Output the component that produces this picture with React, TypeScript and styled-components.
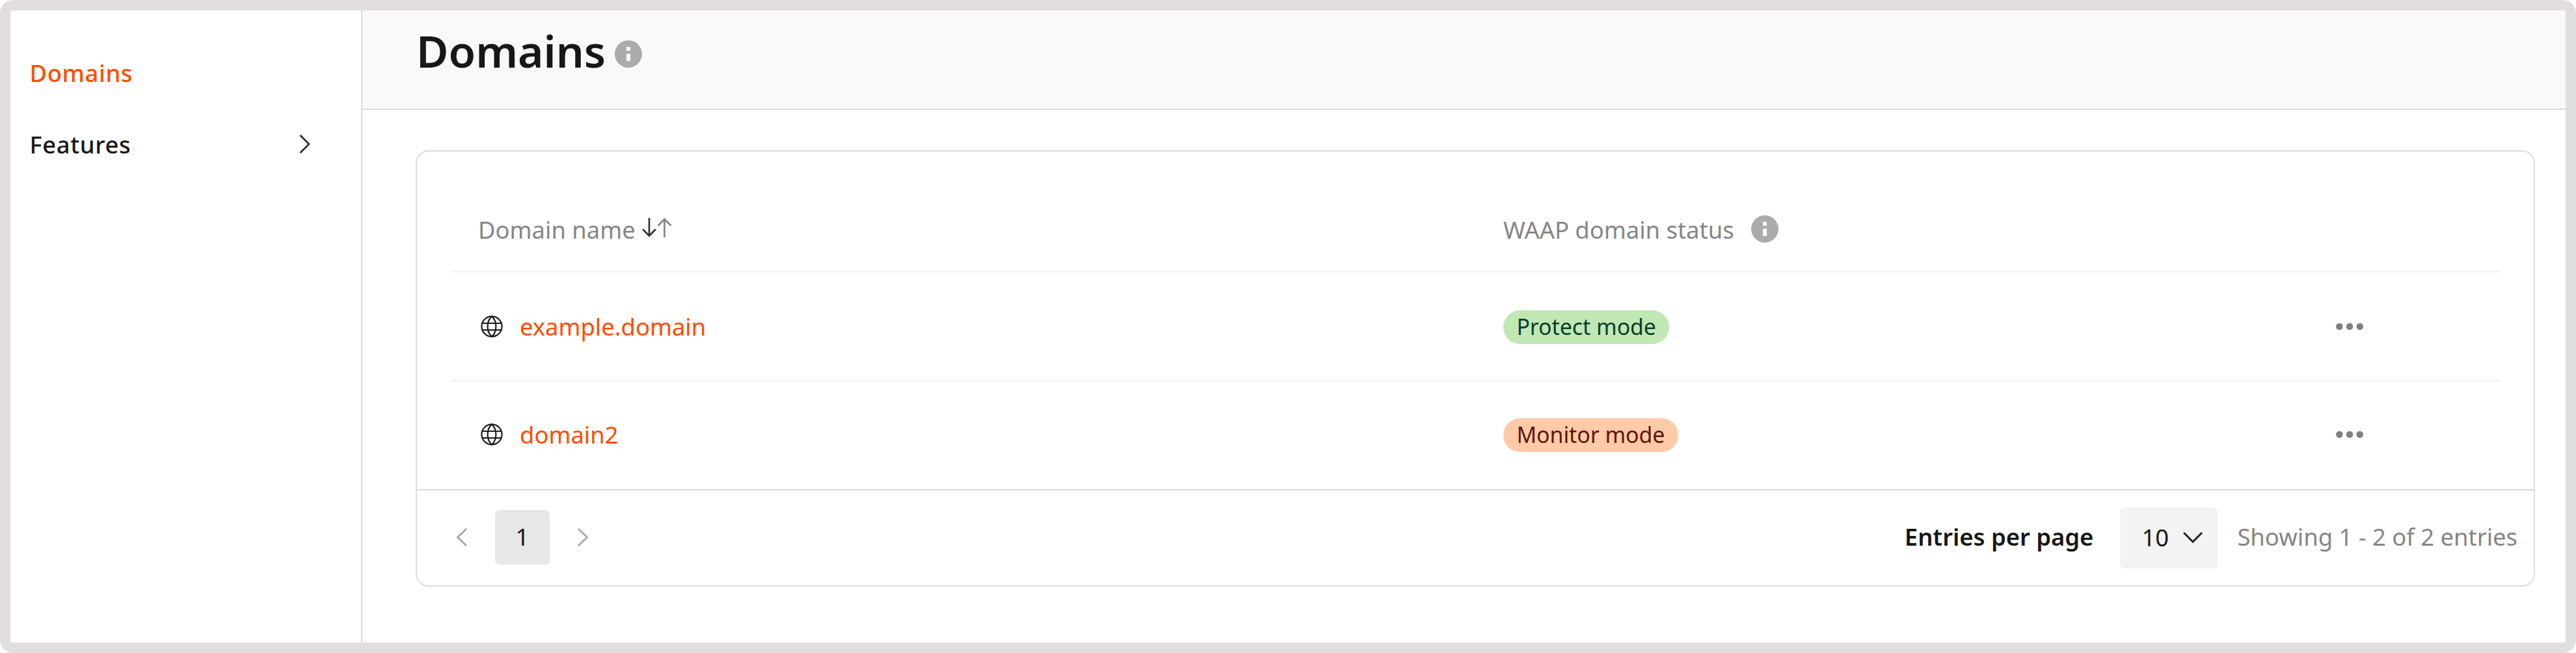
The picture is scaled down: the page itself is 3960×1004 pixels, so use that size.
import React from "react";
import styled, { createGlobalStyle } from "styled-components";

const GlobalStyle = createGlobalStyle`
  *, *::before, *::after { box-sizing: border-box; }
  body { margin: 0; background: #fff; }
`;

const Frame = styled.div`
  display: flex;
  width: 3960px;
  height: 1004px;
  padding: 16px;
  background: #e2dedd;
  border-radius: 20px;
  font-family: "Noto Sans", "Open Sans", sans-serif;
  font-size: 36.4px;
  line-height: 50px;
  color: #171717;
`;

const Shell = styled.div`
  display: flex;
  flex: 1;
  overflow: hidden;
  background: #fff;
  border-radius: 4px;
`;

const Sidebar = styled.nav`
  display: flex;
  flex-direction: column;
  gap: 60px;
  width: 541px;
  padding: 71px 78px 0 29.5px;
  border-right: 2px solid #dadae0;
`;

const NavItem = styled.a<{ $active?: boolean }>`
  display: flex;
  align-items: center;
  justify-content: space-between;
  height: 50px;
  font-weight: 500;
  letter-spacing: 0.6px;
  color: ${(p) => (p.$active ? "#ff4c00" : "#171717")};
`;

const Main = styled.main`
  display: flex;
  flex: 1;
  flex-direction: column;
`;

const PageHeader = styled.header`
  display: flex;
  align-items: flex-start;
  gap: 14px;
  height: 153px;
  padding: 17px 83px 0;
  background: #f9f9f9;
  border-bottom: 2px solid #d8d8de;
`;

const Title = styled.h1`
  margin: 0;
  font-size: 67.6px;
  font-weight: 600;
  line-height: 90px;
`;

const TitleInfo = styled.span`
  display: flex;
  padding-top: 29px;
`;

const Card = styled.section`
  display: flex;
  flex-direction: column;
  height: 671px;
  margin: 62px 47px 0 82px;
  border: 2px solid #dcdce1;
  border-radius: 20px;
`;

const Table = styled.div`
  display: flex;
  flex-direction: column;
  height: 519px;
  padding: 55px 51px 0 52px;
`;

const Row = styled.div<{ $height: number; $last?: boolean }>`
  display: grid;
  grid-template-columns: 1576px 1280px 1fr;
  align-items: center;
  height: ${(p) => p.$height}px;
  padding-left: 42px;
  border-bottom: ${(p) => (p.$last ? "none" : "3px solid #f4f4f4")};
`;

const Cell = styled.div<{ $gap?: number; $indent?: number }>`
  display: flex;
  align-items: center;
  gap: ${(p) => p.$gap ?? 0}px;
  padding-left: ${(p) => p.$indent ?? 0}px;
`;

const HeadLabel = styled.span`
  padding-top: 1px;
  color: #858585;
`;

const DomainLink = styled.a`
  color: #ff4c00;
`;

const Badge = styled.span<{ $tone: "green" | "orange" }>`
  height: 52px;
  margin-top: 2px;
  padding: 0 20.4px;
  border-radius: 26px;
  font-size: 33.8px;
  line-height: 51px;
  background: ${(p) => (p.$tone === "green" ? "#c1e7b5" : "#ffcaa7")};
  color: ${(p) => (p.$tone === "green" ? "#06402b" : "#5e1400")};
`;

const Footer = styled.footer`
  display: flex;
  align-items: center;
  justify-content: space-between;
  height: 148px;
  padding: 0 25px 2px 60px;
  border-top: 2px solid #d8d8e0;
`;

const Pager = styled.div`
  display: flex;
  align-items: center;
  gap: 43px;
`;

const PageButton = styled.button`
  width: 84px;
  height: 84px;
  padding: 0 0 2px;
  border: 0;
  border-radius: 7px;
  background: #e7e7e7;
  color: inherit;
  font: inherit;
`;

const PageInfo = styled.div`
  display: flex;
  align-items: center;
`;

const EntriesLabel = styled.span`
  margin-right: 41px;
  padding-bottom: 2px;
  font-weight: 600;
`;

const Select = styled.button`
  display: flex;
  align-items: center;
  justify-content: space-between;
  width: 150px;
  height: 94px;
  margin: 2px 30px 0 0;
  padding: 0 23px 2px 33px;
  border: 0;
  border-radius: 7px;
  background: #f3f3f3;
  color: inherit;
  font: inherit;
`;

const Summary = styled.span`
  padding-bottom: 2px;
  color: #858585;
`;

const Icon = styled.svg<{ $lift?: number }>`
  display: block;
  flex: none;
  fill: none;
  margin-bottom: ${(p) => p.$lift ?? 0}px;
`;

const InfoIcon = () => (
  <Icon width="42" height="42" viewBox="0 0 42 42">
    <circle cx="21" cy="21" r="21" fill="#ababab" />
    <path d="M18 10h6v6h-6zM18 20.7h6v11h-6z" fill="#fff" />
  </Icon>
);

const Chevron = ({ d, w, h, color }: { d: string; w: number; h: number; color: string }) => (
  <Icon width={w} height={h} viewBox={`0 0 ${w} ${h}`}>
    <path d={d} stroke={color} strokeWidth="3" />
  </Icon>
);

const SortIcon = () => (
  <Icon width="46" height="30" viewBox="0 0 46 30" $lift={5}>
    <path d="M12 0V28M2 17.5L12 27.5L22 17.5" stroke="#333" strokeWidth="2.7" />
    <path d="M35.5 30V2M25.5 12L35.5 2L45.5 12" stroke="#858585" strokeWidth="2.7" />
  </Icon>
);

const GlobeIcon = () => (
  <Icon width="34" height="34" viewBox="0 0 34 34">
    <g stroke="#1c1c1c" strokeWidth="2.2">
      <circle cx="17" cy="17" r="15.6" />
      <path d="M2.2 12H31.8M2.2 22.3H31.8M17 1.4C8.5 9 8.5 25 17 32.6M17 1.4C25.5 9 25.5 25 17 32.6" />
    </g>
  </Icon>
);

const MoreIcon = () => (
  <Icon width="42" height="12" viewBox="0 0 42 12">
    <g fill="#808080">
      <circle cx="5.3" cy="6" r="5.3" />
      <circle cx="21" cy="6" r="5.3" />
      <circle cx="36.7" cy="6" r="5.3" />
    </g>
  </Icon>
);

const domains = [
  { name: "example.domain", status: "Protect mode", tone: "green" as const, height: 168 },
  { name: "domain2", status: "Monitor mode", tone: "orange" as const, height: 162 },
];

export default function App() {
  return (
    <>
      <GlobalStyle />
      <Frame>
        <Shell>
          <Sidebar>
            <NavItem $active>Domains</NavItem>
            <NavItem>
              Features
              <Chevron d="M1.5 1L15 14.5L1.5 28" w={17} h={30} color="#333" />
            </NavItem>
          </Sidebar>
          <Main>
            <PageHeader>
              <Title>Domains</Title>
              <TitleInfo>
                <InfoIcon />
              </TitleInfo>
            </PageHeader>
            <Card>
              <Table>
                <Row $height={131}>
                  <Cell $gap={9}>
                    <HeadLabel>Domain name</HeadLabel>
                    <SortIcon />
                  </Cell>
                  <Cell $gap={26}>
                    <HeadLabel>WAAP domain status</HeadLabel>
                    <InfoIcon />
                  </Cell>
                  <Cell />
                </Row>
                {domains.map((item, index) => (
                  <Row key={item.name} $height={item.height} $last={index === domains.length - 1}>
                    <Cell $gap={26} $indent={4}>
                      <GlobeIcon />
                      <DomainLink>{item.name}</DomainLink>
                    </Cell>
                    <Cell>
                      <Badge $tone={item.tone}>{item.status}</Badge>
                    </Cell>
                    <Cell>
                      <MoreIcon />
                    </Cell>
                  </Row>
                ))}
              </Table>
              <Footer>
                <Pager>
                  <Chevron d="M16 1L2.5 14L16 27" w={17} h={28} color="#ababab" />
                  <PageButton>1</PageButton>
                  <Chevron d="M1 1L14.5 14L1 27" w={17} h={28} color="#ababab" />
                </Pager>
                <PageInfo>
                  <EntriesLabel>Entries per page</EntriesLabel>
                  <Select>
                    10
                    <Chevron d="M1 1L15 15L29 1" w={30} h={17} color="#222" />
                  </Select>
                  <Summary>Showing 1 - 2 of 2 entries</Summary>
                </PageInfo>
              </Footer>
            </Card>
          </Main>
        </Shell>
      </Frame>
    </>
  );
}
